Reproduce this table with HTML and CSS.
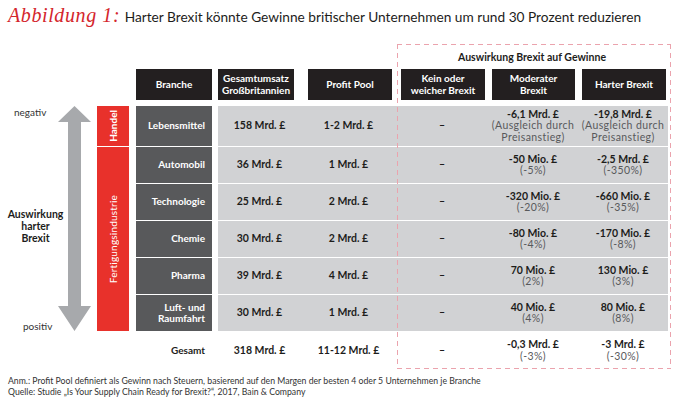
FILE: index.html
```html
<!DOCTYPE html>
<html lang="de">
<head>
<meta charset="utf-8">
<title>Abbildung 1</title>
<link rel="stylesheet" href="styles.css">
</head>
<body>
<h1 class="title"><span class="fig">Abbildung 1:</span> Harter Brexit könnte Gewinne britischer Unternehmen um rund 30 Prozent reduzieren</h1>

<div class="chart">
  <div class="impact-title">Auswirkung Brexit auf Gewinne</div>

  <div class="row r2">
    <div class="hd br">Branche</div>
    <div class="hd c1">Gesamtumsatz<br>Großbritannien</div>
    <div class="hd c2">Profit Pool</div>
    <div class="hd c3">Kein oder<br>weicher Brexit</div>
    <div class="hd c4">Moderater<br>Brexit</div>
    <div class="hd c5">Harter Brexit</div>
  </div>

  <div class="side-neg">negativ</div>
  <div class="side-pos">positiv</div>
  <svg class="arrow" width="33" height="225" viewBox="0 0 33 225"><polygon points="16.5,0 33,16 23,16 23,200 33,200 16.5,225 0,200 10,200 10,16 0,16" fill="#a7a9ac"/></svg>
  <div class="side-label">Auswirkung<br>harter<br>Brexit</div>
  <div class="sec sec-handel"><span>Handel</span></div>
  <div class="sec sec-fert"><span>Fertigungsindustrie</span></div>

  <div class="row r3">
    <div class="cell br">Lebensmittel</div>
    <div class="cell val c1">158 Mrd. £</div>
    <div class="cell val c2">1-2 Mrd. £</div>
    <div class="cell val c3">–</div>
    <div class="cell val c4">-6,1 Mrd. £<span class="sub">(Ausgleich durch<br>Preisanstieg)</span></div>
    <div class="cell val c5">-19,8 Mrd. £<span class="sub">(Ausgleich durch<br>Preisanstieg)</span></div>
  </div>
  <div class="row r4">
    <div class="cell br">Automobil</div>
    <div class="cell val c1">36 Mrd. £</div>
    <div class="cell val c2">1 Mrd. £</div>
    <div class="cell val c3">–</div>
    <div class="cell val c4">-50 Mio. £<span class="sub">(-5%)</span></div>
    <div class="cell val c5">-2,5 Mrd. £<span class="sub">(-350%)</span></div>
  </div>
  <div class="row r5">
    <div class="cell br">Technologie</div>
    <div class="cell val c1">25 Mrd. £</div>
    <div class="cell val c2">2 Mrd. £</div>
    <div class="cell val c3">–</div>
    <div class="cell val c4">-320 Mio. £<span class="sub">(-20%)</span></div>
    <div class="cell val c5">-660 Mio. £<span class="sub">(-35%)</span></div>
  </div>
  <div class="row r6">
    <div class="cell br">Chemie</div>
    <div class="cell val c1">30 Mrd. £</div>
    <div class="cell val c2">2 Mrd. £</div>
    <div class="cell val c3">–</div>
    <div class="cell val c4">-80 Mio. £<span class="sub">(-4%)</span></div>
    <div class="cell val c5">-170 Mio. £<span class="sub">(-8%)</span></div>
  </div>
  <div class="row r7">
    <div class="cell br">Pharma</div>
    <div class="cell val c1">39 Mrd. £</div>
    <div class="cell val c2">4 Mrd. £</div>
    <div class="cell val c3">–</div>
    <div class="cell val c4">70 Mio. £<span class="sub">(2%)</span></div>
    <div class="cell val c5">130 Mio. £<span class="sub">(3%)</span></div>
  </div>
  <div class="row r8">
    <div class="cell br">Luft- und<br>Raumfahrt</div>
    <div class="cell val c1">30 Mrd. £</div>
    <div class="cell val c2">1 Mrd. £</div>
    <div class="cell val c3">–</div>
    <div class="cell val c4">40 Mio. £<span class="sub">(4%)</span></div>
    <div class="cell val c5">80 Mio. £<span class="sub">(8%)</span></div>
  </div>
  <div class="row r9">
    <div class="cell total br">Gesamt</div>
    <div class="cell total c1">318 Mrd. £</div>
    <div class="cell total c2">11-12 Mrd. £</div>
    <div class="cell total c3">–</div>
    <div class="cell total c4">-0,3 Mrd. £<span class="sub">(-3%)</span></div>
    <div class="cell total c5">-3 Mrd. £<span class="sub">(-30%)</span></div>
  </div>

  <div class="impact-box"></div>
</div>

<div class="notes">
  <p>Anm.: Profit Pool definiert als Gewinn nach Steuern, basierend auf den Margen der besten 4 oder 5 Unternehmen je Branche</p>
  <p>Quelle: Studie „Is Your Supply Chain Ready for Brexit?“, 2017, Bain &amp; Company</p>
</div>
</body>
</html>
```

FILE: styles.css
```css
* {
  box-sizing: border-box;
  margin: 0;
  padding: 0;
}

html, body {
  background: #ffffff;
}

body {
  width: 680px;
  height: 412px;
  overflow: hidden;
  font-family: Lato, "Open Sans", sans-serif;
  color: #1d1d1b;
}

/* ---------- title ---------- */
.title {
  height: 44px;
  padding: 4px 0 0 8px;
  font-size: 13.7px;
  font-weight: 400;
  line-height: 22px;
  color: #1d1d1b;
  white-space: nowrap;
}

.fig {
  font-family: "Liberation Serif", serif;
  font-style: italic;
  font-size: 20px;
  letter-spacing: 0.6px;
  color: #d4252c;
  margin-right: 1px;
}

/* ---------- chart grid ---------- */
.chart {
  display: grid;
  grid-template-columns: 58px 33px 6px 32px 7px 76px 6px 83px 95px 92px 90px 90px;
  grid-template-rows: 24px 36px 40px repeat(5, 36px) 37px;
  row-gap: 1px;
  height: 325px;
}

.row { display: contents; }
.r2 > * { grid-row: 2; }
.r3 > * { grid-row: 3; }
.r4 > * { grid-row: 4; }
.r5 > * { grid-row: 5; }
.r6 > * { grid-row: 6; }
.r7 > * { grid-row: 7; }
.r8 > * { grid-row: 8; }
.r9 > * { grid-row: 9; }

.br { grid-column: 6; }
.c1 { grid-column: 8; }
.c2 { grid-column: 9; }
.c3 { grid-column: 10; }
.c4 { grid-column: 11; }
.c5 { grid-column: 12; }

.impact-title {
  grid-row: 1;
  grid-column: 10 / 13;
  align-self: center;
  text-align: center;
  font-size: 10.5px;
  font-weight: 700;
  line-height: 12px;
  padding-top: 2px;
}

.impact-box {
  grid-row: 1 / 10;
  grid-column: 10 / 13;
  margin: 0 -3px 0 1px;
  background:
    linear-gradient(to right, #eba3ad 60%, transparent 0) left top / 9px 1px repeat-x,
    linear-gradient(to right, #eba3ad 60%, transparent 0) left bottom / 9px 1px repeat-x,
    linear-gradient(to bottom, #eba3ad 60%, transparent 0) left top / 1px 9px repeat-y,
    linear-gradient(to bottom, #eba3ad 60%, transparent 0) right top / 1px 9px repeat-y;
}

/* header boxes */
.hd {
  align-self: start;
  height: 31px;
  display: flex;
  align-items: center;
  justify-content: center;
  text-align: center;
  background: #231f20;
  color: #ffffff;
  font-size: 10px;
  font-weight: 700;
  line-height: 11.5px;
}
.hd.c1 { margin-right: 7px; }
.hd.c2 { margin: 0 4px 0 7px; }
.hd.c3 { margin: 0 3px 0 5px; }
.hd.c4 { margin: 0 3px 0 4px; }
.hd.c5 { margin: 0 2px 0 4px; }

/* body cells */
.cell {
  display: flex;
  flex-direction: column;
  justify-content: center;
  align-items: center;
  text-align: center;
  font-size: 10.5px;
  font-weight: 700;
  line-height: 11.5px;
  color: #1d1d1b;
}
.cell.br {
  background: #58595b;
  color: #ffffff;
  align-items: flex-end;
  text-align: right;
  padding-right: 7px;
  font-size: 10px;
}
.cell.total.br {
  background: none;
  color: #1d1d1b;
}
.val { background: #d1d2d4; }

.sub {
  font-weight: 400;
  color: #58595b;
  letter-spacing: 0.4px;
}

/* left side */
.side-neg {
  grid-column: 1;
  grid-row: 3;
  align-self: start;
  padding-left: 14px;
  font-size: 10px;
  line-height: 12px;
  color: #333333;
}
.side-pos {
  grid-column: 1;
  grid-row: 8;
  align-self: end;
  padding-left: 23px;
  font-size: 10px;
  line-height: 10px;
  color: #333333;
}
.arrow {
  grid-column: 2;
  grid-row: 3 / 9;
  display: block;
}
.side-label {
  grid-column: 1 / 3;
  grid-row: 3 / 9;
  align-self: center;
  justify-self: start;
  width: 71px;
  margin-top: 14px;
  text-align: center;
  font-size: 10.5px;
  font-weight: 700;
  line-height: 12px;
}

.sec {
  grid-column: 4;
  background: #e8312b;
  color: #ffffff;
  display: flex;
  align-items: center;
  justify-content: center;
  font-size: 10px;
  line-height: 12px;
}
.sec span {
  writing-mode: vertical-rl;
  transform: rotate(180deg);
}
.sec-handel {
  grid-row: 3;
  font-weight: 700;
}
.sec-fert {
  grid-row: 4 / 9;
  font-weight: 400;
  letter-spacing: 0.2px;
}

/* notes */
.notes {
  padding: 6px 0 0 8px;
  font-size: 8.7px;
  line-height: 11px;
  color: #333333;
}
```
